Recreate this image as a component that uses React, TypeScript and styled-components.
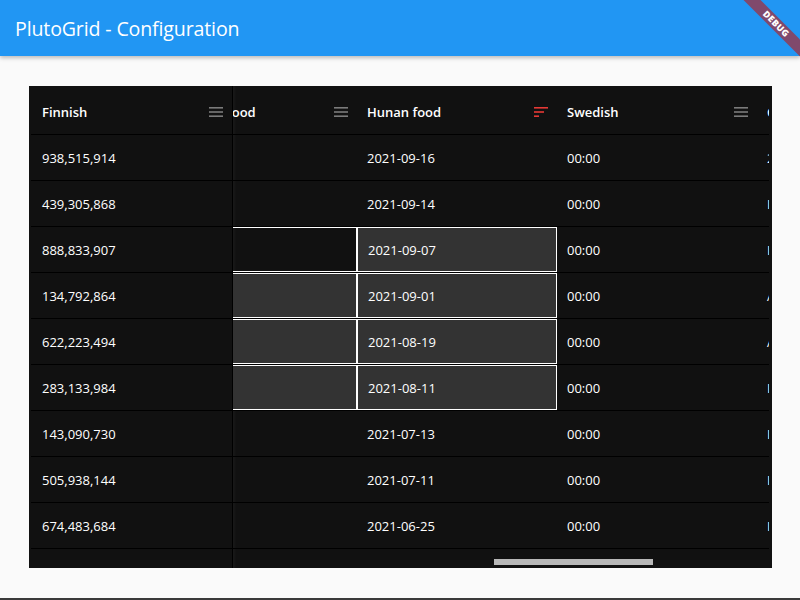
import styled, { createGlobalStyle, css } from "styled-components";

const GlobalStyle = createGlobalStyle`
  html, body {
    margin: 0;
    padding: 0;
    background: #fafafa;
  }
  * {
    box-sizing: border-box;
  }
`;

type Col = { title: string; icon: "menu" | "sort" };

const scrollColumns: Col[] = [
  { title: "Japanese food", icon: "menu" },
  { title: "Hunan food", icon: "sort" },
  { title: "Swedish", icon: "menu" },
  { title: "Chinese", icon: "menu" },
];

const rows = [
  { finnish: "938,515,914", date: "2021-09-16", last: "2:00" },
  { finnish: "439,305,868", date: "2021-09-14", last: "Ilse" },
  { finnish: "888,833,907", date: "2021-09-07", last: "Ilse" },
  { finnish: "134,792,864", date: "2021-09-01", last: "Ann" },
  { finnish: "622,223,494", date: "2021-08-19", last: "Ann" },
  { finnish: "283,133,984", date: "2021-08-11", last: "Ilse" },
  { finnish: "143,090,730", date: "2021-07-13", last: "Ilse" },
  { finnish: "505,938,144", date: "2021-07-11", last: "Ilse" },
  { finnish: "674,483,684", date: "2021-06-25", last: "Ilse" },
  { finnish: "", date: "", last: "" },
];

// rows 3..6 are the selected block
const isSelected = (i: number) => i >= 2 && i <= 5;

function MenuIcon() {
  return (
    <svg width="14" height="12" viewBox="0 0 14 12">
      <rect x="0" y="1" width="14" height="1.6" fill="#7b7b7b" />
      <rect x="0" y="5.2" width="14" height="1.6" fill="#7b7b7b" />
      <rect x="0" y="9.4" width="14" height="1.6" fill="#7b7b7b" />
    </svg>
  );
}

function SortIcon() {
  return (
    <svg width="14" height="12" viewBox="0 0 14 12">
      <rect x="0" y="1" width="14" height="1.6" fill="#e53935" />
      <rect x="0" y="5.2" width="10" height="1.6" fill="#e53935" />
      <rect x="0" y="9.4" width="5" height="1.6" fill="#e53935" />
    </svg>
  );
}

export default function App() {
  return (
    <Screen>
      <GlobalStyle />
      <AppBar>
        <Title>PlutoGrid - Configuration</Title>
      </AppBar>
      <Body>
        <Grid>
          <Frozen>
            <HeaderRow>
              <HeaderCell $frozen>
                <HeaderText>Finnish</HeaderText>
                <MenuIcon />
              </HeaderCell>
            </HeaderRow>
            {rows.map((r, i) => (
              <Row key={i} $last={i === rows.length - 1}>
                <Cell $frozen>{r.finnish}</Cell>
              </Row>
            ))}
          </Frozen>
          <ScrollPane>
            <Track>
              <HeaderRow>
                {scrollColumns.map((c) => (
                  <HeaderCell key={c.title}>
                    <HeaderText>{c.title}</HeaderText>
                    {c.icon === "sort" ? <SortIcon /> : <MenuIcon />}
                  </HeaderCell>
                ))}
              </HeaderRow>
              {rows.map((r, i) => (
                <Row key={i} $last={i === rows.length - 1}>
                  <Cell $outlined={isSelected(i)} $filled={i >= 3 && i <= 5} />
                  <Cell $outlined={isSelected(i)} $filled={isSelected(i)}>
                    {r.date}
                  </Cell>
                  <Cell>{r.date ? "00:00" : ""}</Cell>
                  <Cell>{r.last}</Cell>
                </Row>
              ))}
            </Track>
            <ScrollThumb />
          </ScrollPane>
        </Grid>
      </Body>
      <BottomEdge />
      <DebugBanner>DEBUG</DebugBanner>
    </Screen>
  );
}

const uiFont = `"Open Sans", "Noto Sans", sans-serif`;

const Screen = styled.div`
  position: relative;
  width: 800px;
  height: 600px;
  overflow: hidden;
  display: flex;
  flex-direction: column;
  background: #fafafa;
  font-family: ${uiFont};
`;

const AppBar = styled.header`
  height: 56px;
  flex: none;
  display: flex;
  align-items: center;
  padding-left: 15px;
  background: #2196f3;
  box-shadow: 0 2px 4px rgba(0, 0, 0, 0.25);
  position: relative;
  z-index: 1;
`;

const Title = styled.h1`
  margin: 0;
  font-size: 19.6px;
  font-weight: 400;
  color: #fff;
  letter-spacing: -0.15px;
`;

const Body = styled.main`
  flex: 1;
  display: flex;
  padding: 30px 28px 30px 29px;
  min-height: 0;
`;

const Grid = styled.section`
  flex: 1;
  display: flex;
  background: #111111;
  padding: 0 3px 0 2px;
  overflow: hidden;
`;

const Frozen = styled.div`
  width: 202px;
  flex: none;
  border-right: 1px solid #000;
`;

const ScrollPane = styled.div`
  flex: 1;
  position: relative;
  overflow: hidden;
  box-shadow: inset 4px 0 3px -2px rgba(255, 255, 255, 0.04);
`;

const Track = styled.div`
  width: 800px;
  margin-left: -76px;
`;

const HeaderRow = styled.div`
  display: flex;
  height: 49px;
  padding-top: 4px;
  border-bottom: 1px solid #000;
`;

const HeaderCell = styled.div<{ $frozen?: boolean }>`
  width: ${({ $frozen }) => ($frozen ? "201px" : "200px")};
  flex: none;
  display: flex;
  align-items: center;
  justify-content: space-between;
  padding: 0 9px 0 ${({ $frozen }) => ($frozen ? "11px" : "10px")};
  svg {
    flex: none;
  }
`;

const HeaderText = styled.span`
  font-size: 13px;
  font-weight: 600;
  color: #fff;
  white-space: nowrap;
`;

const Row = styled.div<{ $last?: boolean }>`
  display: flex;
  height: 46px;
  border-bottom: 1px solid ${({ $last }) => ($last ? "transparent" : "#000")};
`;

const Cell = styled.div<{ $frozen?: boolean; $outlined?: boolean; $filled?: boolean }>`
  width: ${({ $frozen }) => ($frozen ? "201px" : "200px")};
  height: 45px;
  flex: none;
  display: flex;
  align-items: center;
  padding-left: ${({ $frozen }) => ($frozen ? "11px" : "10px")};
  font-size: 13px;
  color: #fff;
  white-space: nowrap;
  overflow: hidden;
  ${({ $outlined }) =>
    $outlined &&
    css`
      border: 1px solid #fff;
    `}
  ${({ $filled }) =>
    $filled &&
    css`
      background: #333333;
    `}
`;

const ScrollThumb = styled.div`
  position: absolute;
  left: 261px;
  top: 473px;
  width: 159px;
  height: 6px;
  background: #b8b8b8;
`;

const BottomEdge = styled.div`
  height: 2px;
  flex: none;
  background: #3a3a3a;
`;

const DebugBanner = styled.div`
  position: absolute;
  left: 720px;
  top: 18px;
  width: 112px;
  height: 12px;
  transform: rotate(45deg);
  background: rgba(183, 28, 28, 0.63);
  color: #fff;
  font-family: ${uiFont};
  font-size: 9px;
  font-weight: 800;
  line-height: 12px;
  text-align: center;
  letter-spacing: 0.4px;
  z-index: 2;
`;
